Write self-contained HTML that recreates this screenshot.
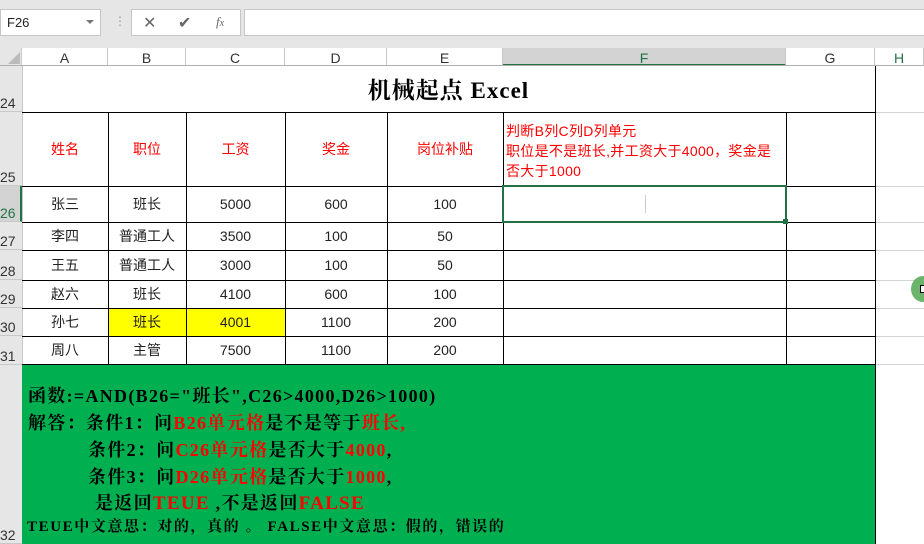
<!DOCTYPE html>
<html><head><meta charset="utf-8"><style>
*{margin:0;padding:0;box-sizing:border-box}
body{width:924px;height:544px;overflow:hidden;background:#fff;position:relative;font-family:"Liberation Sans","Noto Sans CJK SC",sans-serif}
.a{position:absolute}
.hl{position:absolute;height:1px;background:#000}
.vl{position:absolute;width:1px;background:#000}
.ch{position:absolute;top:48px;height:18px;font-size:14px;color:#333;text-align:center;line-height:20px;border-right:1px solid #c8c8c8}
.rh{position:absolute;left:0;width:22px;font-size:14px;color:#333;border-bottom:1px solid #c8c8c8;background:#e6e6e6;display:flex;align-items:flex-end;padding-left:0px;line-height:16px}
.c{position:absolute;font-size:14px;text-align:center;display:flex;align-items:center;justify-content:center;color:#222}
.g{position:absolute;font-family:"Liberation Serif","Noto Serif CJK SC",serif;font-weight:bold;font-size:18px;letter-spacing:1.3px;color:#000;white-space:nowrap}
.r{color:#f00}
</style></head><body>
<div class="a" style="left:0;top:0;width:924px;height:48px;background:#e6e6e6"></div>
<div class="a" style="left:0;top:9px;width:101px;height:27px;background:#fff;border:1px solid #c6c6c6;font-size:13px;line-height:25px;padding-left:6px;color:#222">F26</div>
<div class="a" style="left:86px;top:20px;width:0;height:0;border-left:4px solid transparent;border-right:4px solid transparent;border-top:4px solid #777"></div>
<div class="a" style="left:114px;top:14px;color:#999;font-size:12px">⋮</div>
<div class="a" style="left:131px;top:9px;width:110px;height:27px;background:#fff;border:1px solid #c6c6c6"></div>
<div class="a" style="left:143px;top:13px;color:#666;font-size:16px">✕</div>
<div class="a" style="left:178px;top:13px;color:#666;font-size:16px">✔</div>
<div class="a" style="left:216px;top:14px;color:#666;font-size:13px;font-style:italic;font-family:'Liberation Serif',serif">f<span style="font-size:10px">x</span></div>
<div class="a" style="left:244px;top:9px;width:690px;height:27px;background:#fff;border:1px solid #c6c6c6"></div>
<div class="a" style="left:0;top:48px;width:22px;height:18px;background:#e6e6e6;border-right:1px solid #c8c8c8"></div>
<div class="a" style="left:8px;top:52px;width:0;height:0;border-left:12px solid transparent;border-bottom:12px solid #bbb"></div>
<div class="ch" style="left:22px;width:86px">A</div>
<div class="ch" style="left:108px;width:78px">B</div>
<div class="ch" style="left:186px;width:99px">C</div>
<div class="ch" style="left:285px;width:102px">D</div>
<div class="ch" style="left:387px;width:116px">E</div>
<div class="ch" style="left:503px;width:283px;background:#d3d3d3;border-bottom:2px solid #217346;color:#217346">F</div>
<div class="ch" style="left:786px;width:89px">G</div>
<div class="ch" style="left:875px;width:49px;color:#217346">H</div>
<div class="a" style="left:0;top:65px;width:924px;height:1px;background:#b0b0b0"></div>
<div class="rh" style="top:66px;height:46px">24</div>
<div class="rh" style="top:112px;height:74px">25</div>
<div class="rh" style="top:186px;height:36px;background:#d3d3d3;color:#217346;border-right:2px solid #217346">26</div>
<div class="rh" style="top:222px;height:28px">27</div>
<div class="rh" style="top:250px;height:30px">28</div>
<div class="rh" style="top:280px;height:28px">29</div>
<div class="rh" style="top:308px;height:28px">30</div>
<div class="rh" style="top:336px;height:29px">31</div>
<div class="rh" style="top:365px;height:179px">32</div>
<div class="a" style="left:22px;top:66px;width:1px;height:478px;background:#c8c8c8"></div>
<div class="a" style="left:876px;top:112px;width:48px;height:1px;background:#d4d4d4"></div>
<div class="a" style="left:876px;top:186px;width:48px;height:1px;background:#d4d4d4"></div>
<div class="a" style="left:876px;top:222px;width:48px;height:1px;background:#d4d4d4"></div>
<div class="a" style="left:876px;top:250px;width:48px;height:1px;background:#d4d4d4"></div>
<div class="a" style="left:876px;top:280px;width:48px;height:1px;background:#d4d4d4"></div>
<div class="a" style="left:876px;top:308px;width:48px;height:1px;background:#d4d4d4"></div>
<div class="a" style="left:876px;top:336px;width:48px;height:1px;background:#d4d4d4"></div>
<div class="a" style="left:876px;top:364px;width:48px;height:1px;background:#d4d4d4"></div>
<div class="a" style="left:22px;top:72px;width:853px;text-align:center;font-family:'Liberation Serif','Noto Serif CJK SC',serif;font-weight:bold;font-size:23px;letter-spacing:1px">机械起点 Excel</div>
<div class="a" style="left:108px;top:308px;width:177px;height:28px;background:#ff0"></div>
<div class="a" style="left:22px;top:364px;width:853px;height:180px;background:#00b050"></div>
<div class="hl" style="left:22px;top:112px;width:854px"></div>
<div class="hl" style="left:22px;top:186px;width:854px"></div>
<div class="hl" style="left:22px;top:222px;width:854px"></div>
<div class="hl" style="left:22px;top:250px;width:854px"></div>
<div class="hl" style="left:22px;top:280px;width:854px"></div>
<div class="hl" style="left:22px;top:308px;width:854px"></div>
<div class="hl" style="left:22px;top:336px;width:854px"></div>
<div class="hl" style="left:22px;top:364px;width:854px"></div>
<div class="vl" style="left:875px;top:66px;height:478px"></div>
<div class="vl" style="left:108px;top:112px;height:252px"></div>
<div class="vl" style="left:186px;top:112px;height:252px"></div>
<div class="vl" style="left:285px;top:112px;height:252px"></div>
<div class="vl" style="left:387px;top:112px;height:252px"></div>
<div class="vl" style="left:503px;top:112px;height:252px"></div>
<div class="vl" style="left:786px;top:112px;height:252px"></div>
<div class="a" style="left:502px;top:185px;width:285px;height:38px;border:2px solid #217346"></div>
<div class="a" style="left:783px;top:219px;width:5px;height:5px;background:#217346"></div>
<div class="a" style="left:645px;top:195px;width:1px;height:18px;background:#ccc"></div>
<div class="c" style="left:22px;top:112px;width:86px;height:74px;color:#f00">姓名</div>
<div class="c" style="left:108px;top:112px;width:78px;height:74px;color:#f00">职位</div>
<div class="c" style="left:186px;top:112px;width:99px;height:74px;color:#f00">工资</div>
<div class="c" style="left:285px;top:112px;width:102px;height:74px;color:#f00">奖金</div>
<div class="c" style="left:387px;top:112px;width:116px;height:74px;color:#f00">岗位补贴</div>
<div class="a" style="left:506px;top:121px;width:277px;font-size:14px;line-height:20px;color:#f00;letter-spacing:0.3px">判断B列C列D列单元<br>职位是不是班长,并工资大于4000，奖金是否大于1000</div>
<div class="c" style="left:22px;top:186px;width:86px;height:36px">张三</div><div class="c" style="left:108px;top:186px;width:78px;height:36px">班长</div><div class="c" style="left:186px;top:186px;width:99px;height:36px">5000</div><div class="c" style="left:285px;top:186px;width:102px;height:36px">600</div><div class="c" style="left:387px;top:186px;width:116px;height:36px">100</div>
<div class="c" style="left:22px;top:222px;width:86px;height:28px">李四</div><div class="c" style="left:108px;top:222px;width:78px;height:28px">普通工人</div><div class="c" style="left:186px;top:222px;width:99px;height:28px">3500</div><div class="c" style="left:285px;top:222px;width:102px;height:28px">100</div><div class="c" style="left:387px;top:222px;width:116px;height:28px">50</div>
<div class="c" style="left:22px;top:250px;width:86px;height:30px">王五</div><div class="c" style="left:108px;top:250px;width:78px;height:30px">普通工人</div><div class="c" style="left:186px;top:250px;width:99px;height:30px">3000</div><div class="c" style="left:285px;top:250px;width:102px;height:30px">100</div><div class="c" style="left:387px;top:250px;width:116px;height:30px">50</div>
<div class="c" style="left:22px;top:280px;width:86px;height:28px">赵六</div><div class="c" style="left:108px;top:280px;width:78px;height:28px">班长</div><div class="c" style="left:186px;top:280px;width:99px;height:28px">4100</div><div class="c" style="left:285px;top:280px;width:102px;height:28px">600</div><div class="c" style="left:387px;top:280px;width:116px;height:28px">100</div>
<div class="c" style="left:22px;top:308px;width:86px;height:28px">孙七</div><div class="c" style="left:108px;top:308px;width:78px;height:28px">班长</div><div class="c" style="left:186px;top:308px;width:99px;height:28px">4001</div><div class="c" style="left:285px;top:308px;width:102px;height:28px">1100</div><div class="c" style="left:387px;top:308px;width:116px;height:28px">200</div>
<div class="c" style="left:22px;top:336px;width:86px;height:28px">周八</div><div class="c" style="left:108px;top:336px;width:78px;height:28px">主管</div><div class="c" style="left:186px;top:336px;width:99px;height:28px">7500</div><div class="c" style="left:285px;top:336px;width:102px;height:28px">1100</div><div class="c" style="left:387px;top:336px;width:116px;height:28px">200</div>
<div class="g" style="left:28px;top:382px">函数:=AND(B26="班长",C26&gt;4000,D26&gt;1000)</div>
<div class="g" style="left:28px;top:409px">解答：条件1：问<span class="r">B26单元格</span>是不是等于<span class="r">班长,</span></div>
<div class="g" style="left:88px;top:436px">条件2：问<span class="r">C26单元格</span>是否大于<span class="r">4000</span>,</div>
<div class="g" style="left:88px;top:463px">条件3：问<span class="r">D26单元格</span>是否大于<span class="r">1000</span>,</div>
<div class="g" style="left:95px;top:489px">是返回<span class="r" style="font-size:19px">TEUE</span> ,不是返回<span class="r" style="font-size:19px">FALSE</span></div>
<div class="g" style="left:27px;top:515px;font-size:15px;letter-spacing:1.6px">TEUE中文意思：对的，真的 。 FALSE中文意思：假的，错误的</div>
<div class="a" style="left:911px;top:276px;width:24px;height:26px;border-radius:50%;background:#6cb46c"></div>
<div class="a" style="left:920px;top:285px;width:6px;height:8px;background:#fff;border:1px solid #000"></div>
</body></html>
